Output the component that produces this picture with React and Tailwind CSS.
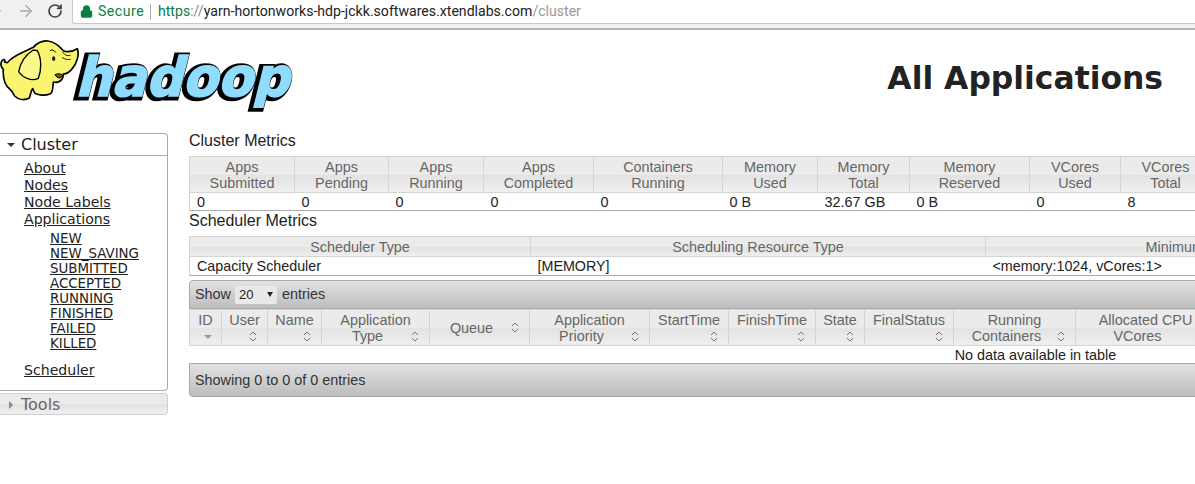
import { ArrowLeft, ArrowRight, Lock, RotateCw } from 'lucide-react';

const headGradient = 'bg-[linear-gradient(#ebebeb_0%,#ebebeb_50%,#e2e2e2_50%,#f0f0f0_100%)]';
const barGradient = 'bg-[linear-gradient(#e2e2e2,#bdbdbd)]';

const clusterCols = [
  { w: 'w-[105px]', a: 'Apps', b: 'Submitted', v: '0' },
  { w: 'w-[94px]', a: 'Apps', b: 'Pending', v: '0' },
  { w: 'w-[95px]', a: 'Apps', b: 'Running', v: '0' },
  { w: 'w-[110px]', a: 'Apps', b: 'Completed', v: '0' },
  { w: 'w-[129px]', a: 'Containers', b: 'Running', v: '0' },
  { w: 'w-[95px]', a: 'Memory', b: 'Used', v: '0 B' },
  { w: 'w-[92px]', a: 'Memory', b: 'Total', v: '32.67 GB' },
  { w: 'w-[120px]', a: 'Memory', b: 'Reserved', v: '0 B' },
  { w: 'w-[91px]', a: 'VCores', b: 'Used', v: '0' },
  { w: 'w-[90px]', a: 'VCores', b: 'Total', v: '8' },
];

const schedulerCols = [
  { w: 'w-[341px]', h: 'Scheduler Type', v: 'Capacity Scheduler' },
  { w: 'w-[455px]', h: 'Scheduling Resource Type', v: '[MEMORY]' },
  { w: 'w-[444px]', h: 'Minimum Allocation', v: '<memory:1024, vCores:1>' },
];

const appCols = [
  { w: 'w-[32px]', a: 'ID', sort: 'desc' },
  { w: 'w-[46px]', a: 'User' },
  { w: 'w-[54px]', a: 'Name' },
  { w: 'w-[108px]', a: 'Application', b: 'Type' },
  { w: 'w-[100px]', a: 'Queue', inline: true },
  { w: 'w-[120px]', a: 'Application', b: 'Priority' },
  { w: 'w-[79px]', a: 'StartTime' },
  { w: 'w-[87px]', a: 'FinishTime' },
  { w: 'w-[49px]', a: 'State' },
  { w: 'w-[89px]', a: 'FinalStatus' },
  { w: 'w-[122px]', a: 'Running', b: 'Containers' },
  { w: 'w-[140px]', a: 'Allocated CPU', b: 'VCores' },
];

const clusterLinks = ['About', 'Nodes', 'Node Labels', 'Applications'];
const stateLinks = ['NEW', 'NEW_SAVING', 'SUBMITTED', 'ACCEPTED', 'RUNNING', 'FINISHED', 'FAILED', 'KILLED'];

function SortIcon() {
  return (
    <svg width="8" height="11" viewBox="0 0 8 11" fill="none" stroke="#777" strokeWidth="1" className="block">
      <path d="M1 4l3-3 3 3M1 7l3 3 3-3" />
    </svg>
  );
}

function HadoopLogo() {
  return (
    <svg width="296" height="80" viewBox="0 0 296 80" className="block">
      {/* black outline layer with a small offset, blue face on top */}
      <g transform="translate(75 58) skewX(-14)" fontFamily="'DejaVu Sans', sans-serif" fontWeight="700" fontSize="54">
        <text x="-2" y="1" textLength="214" lengthAdjust="spacingAndGlyphs" fill="#000" stroke="#000" strokeWidth="7" strokeLinejoin="miter">
          hadoop
        </text>
        <text aria-hidden="true" textLength="214" lengthAdjust="spacingAndGlyphs" fill="#8fdcff" stroke="#8fdcff" strokeWidth="1.6" strokeLinejoin="miter">
          hadoop
        </text>
      </g>
      {/* elephant, traced from the logo */}
      <g transform="translate(0 -8) scale(0.3333)">
        <path
          d="M22 98C40 75 70 68 100 52C125 24 160 26 190 62C205 68 222 62 232 56C238 72 232 100 215 118C206 128 196 132 190 132C190 150 178 160 160 156C158 172 160 188 150 192C135 198 115 196 105 190C100 184 100 178 98 176C92 182 92 196 88 204C75 212 55 210 44 198C38 190 38 184 32 180C15 168 8 145 10 118C3 112 0 100 6 92C10 86 16 88 14 96z"
          fill="#f9f570"
          stroke="#000"
          strokeWidth="5"
          strokeLinejoin="round"
        />
        <path d="M100 60C80 72 62 95 56 125C70 145 95 155 115 145C125 120 125 85 112 62z" fill="#fbf88c" stroke="#000" strokeWidth="4" />
        <path d="M150 62C155 58 162 60 168 68" fill="none" stroke="#000" strokeWidth="3" />
        <ellipse cx="161" cy="86" rx="5" ry="7" fill="#222" />
        <path d="M165 134C172 146 182 148 188 136C182 130 172 130 165 134z" fill="#6b5a10" stroke="#000" strokeWidth="3" />
        <path d="M188 66C195 76 200 78 212 76M186 82C195 88 202 90 212 88" fill="none" stroke="#000" strokeWidth="2.5" />
      </g>
    </svg>
  );
}

function BrowserBar() {
  return (
    <div className="h-[30px] bg-[#f1f1f1] border-b-2 border-[#b5b5b5] flex items-start shrink-0">
      <div className="w-[72px] h-[22px] flex items-center shrink-0">
        <ArrowLeft size={16} strokeWidth={2} className="-ml-[12px] text-[#bbb]" />
        <ArrowRight size={18} strokeWidth={2} className="ml-[13px] text-[#aaa]" />
        <RotateCw size={16} strokeWidth={2.6} className="ml-[12px] text-[#444]" />
      </div>
      <div className="flex-1 h-[24px] bg-white border-l border-b border-[#c9c9c9] rounded-bl-[3px] flex items-center font-['Roboto',sans-serif] text-[14.1px] whitespace-nowrap">
        <Lock size={13} strokeWidth={3} className="text-[#0b8043] fill-[#0b8043] ml-[7px]" />
        <span className="text-[#0b8043] ml-[5px] w-[42px] tracking-[0.5px]">Secure</span>
        <span className="w-px h-[16px] bg-[#aaa] ml-[10px] mr-[7px]" />
        <span className="text-[#0b8043]">https</span>
        <span className="text-[#888]">://</span>
        <span className="text-[#222]">yarn-hortonworks-hdp-jckk.softwares.xtendlabs.com</span>
        <span className="text-[#999]">/cluster</span>
      </div>
    </div>
  );
}

function SideNav() {
  return (
    <nav className="w-[168px] shrink-0 font-['DejaVu_Sans',sans-serif]">
      <div className="border border-l-0 border-[#aaa] rounded-r-[4px] h-[258px]">
        <div className="h-[22px] border-b border-[#aaa] flex items-center pt-[1px] pl-[7px] text-[16px] text-[#222]">
          <span className="w-0 h-0 border-x-[4px] border-x-transparent border-t-[4px] border-t-[#333] mr-[6px]" />
          Cluster
        </div>
        <ul className="pl-[24px] pt-[4px] text-[14.1px] leading-[17px] text-[#222]">
          {clusterLinks.map(l => (
            <li key={l}><a className="underline">{l}</a></li>
          ))}
        </ul>
        <ul className="pl-[50px] pt-[3px] text-[13.4px] leading-[15px] text-[#222]">
          {stateLinks.map(l => (
            <li key={l}><a className="underline">{l}</a></li>
          ))}
        </ul>
        <div className="pl-[24px] pt-[11px] text-[14.1px] leading-[17px] text-[#222]">
          <a className="underline">Scheduler</a>
        </div>
      </div>
      <div className={`mt-[2px] h-[22px] border border-l-0 border-[#d0d0d0] rounded-r-[4px] flex items-center pt-[2px] pl-[9px] text-[16px] text-[#666] ${headGradient}`}>
        <span className="w-0 h-0 border-y-[4px] border-y-transparent border-l-[4px] border-l-[#888] mr-[8px]" />
        Tools
      </div>
    </nav>
  );
}

function MetricsTables() {
  return (
    <>
      <h3 className="text-[16px] leading-[18px] text-[#222] h-[24px] -mt-[1px] whitespace-nowrap">Cluster Metrics</h3>
      <table className="table-fixed w-[1021px] border-collapse text-[14.4px] leading-[16px]">
        <thead>
          <tr className={headGradient}>
            {clusterCols.map((c, i) => (
              <th key={i} className={`${c.w} h-[36px] font-normal text-[#666] border border-[#d5d5d5] p-0`}>
                {c.a}<br />{c.b}
              </th>
            ))}
          </tr>
        </thead>
        <tbody>
          <tr className="border-b border-[#aaa]">
            {clusterCols.map((c, i) => (
              <td key={i} className="h-[18px] pl-[7px] text-[#222] first:border-l first:border-[#ccc] whitespace-nowrap">{c.v}</td>
            ))}
          </tr>
        </tbody>
      </table>
      <h3 className="text-[16px] leading-[18px] text-[#222] h-[24px] mt-[1px] whitespace-nowrap">Scheduler Metrics</h3>
      <table className="table-fixed w-[1240px] border-collapse text-[14.4px] leading-[16px]">
        <thead>
          <tr className={headGradient}>
            {schedulerCols.map(c => (
              <th key={c.h} className={`${c.w} h-[20px] font-normal text-[#666] border border-[#d5d5d5] p-0`}>{c.h}</th>
            ))}
          </tr>
        </thead>
        <tbody>
          <tr className="border-b border-[#aaa]">
            {schedulerCols.map(c => (
              <td key={c.h} className="h-[19px] pl-[7px] text-[14.3px] text-[#222] first:border-l first:border-[#ccc] whitespace-nowrap">{c.v}</td>
            ))}
          </tr>
        </tbody>
      </table>
    </>
  );
}

function AppsTable() {
  return (
    <div className="mt-[4px] w-[1692px]">
      <div className={`h-[29px] border border-[#a8a8a8] rounded-t-[4px] flex items-center pl-[5px] text-[#333] ${barGradient}`}>
        Show
        <span className="ml-[4px] mr-[5px] w-[42px] h-[18px] bg-[#e9e9e9] rounded-[2px] flex items-center justify-between pl-[4px] pr-[4px] text-[13px] text-[#222]">
          20
          <span className="w-0 h-0 border-x-[3.5px] border-x-transparent border-t-[5px] border-t-[#222]" />
        </span>
        entries
      </div>
      <table className="table-fixed border-collapse leading-[16px] w-[1692px]">
        <thead>
          <tr className={headGradient}>
            {appCols.map(c => (
              <th key={c.a + (c.b || '')} className={`${c.w} h-[36px] relative font-normal text-[#666] border border-[#d5d5d5] p-0 align-top pt-[2px]`}>
                {c.inline ? (
                  <span className="absolute inset-0 flex items-center justify-center pr-[16px]">{c.a}</span>
                ) : (
                  <>{c.a}{c.b && <span className="block pr-[16px]">{c.b}</span>}</>
                )}
                <span className={`absolute right-[10px] ${c.inline ? 'top-[12px]' : 'bottom-[3px]'}`}>
                  {c.sort === 'desc'
                    ? <span className="block mb-[3px] -mr-[1px] w-0 h-0 border-x-[4px] border-x-transparent border-t-[4px] border-t-[#999]" />
                    : <SortIcon />}
                </span>
              </th>
            ))}
            <th className="font-normal border border-[#d5d5d5]" />
          </tr>
        </thead>
        <tbody>
          <tr>
            <td colSpan={13} className="h-[17px] pt-[1px] text-center text-[#222] pb-0 px-0">
              <span className="ml-[1px]">No data available in table</span>
            </td>
          </tr>
        </tbody>
      </table>
      <div className={`h-[34px] border border-[#a8a8a8] rounded-b-[4px] flex items-center pt-[2px] pl-[5px] text-[#333] ${barGradient}`}>
        Showing 0 to 0 of 0 entries
      </div>
    </div>
  );
}

export default function App() {
  return (
    <div className="w-[1195px] h-[484px] overflow-hidden bg-white flex flex-col font-['Liberation_Sans',Arial,sans-serif] text-[14.4px]">
      <BrowserBar />
      <header className="h-[103px] shrink-0 flex justify-between pt-[8px] pr-[32px]">
        <HadoopLogo />
        <h1 className="font-['DejaVu_Sans',sans-serif] font-bold text-[31.4px] leading-[40px] text-[#222] mt-[20px] whitespace-nowrap">All Applications</h1>
      </header>
      <div className="flex-1 min-h-0 flex">
        <SideNav />
        <main className="flex-1 min-w-0 ml-[21px] overflow-hidden">
          <MetricsTables />
          <AppsTable />
        </main>
      </div>
    </div>
  );
}
